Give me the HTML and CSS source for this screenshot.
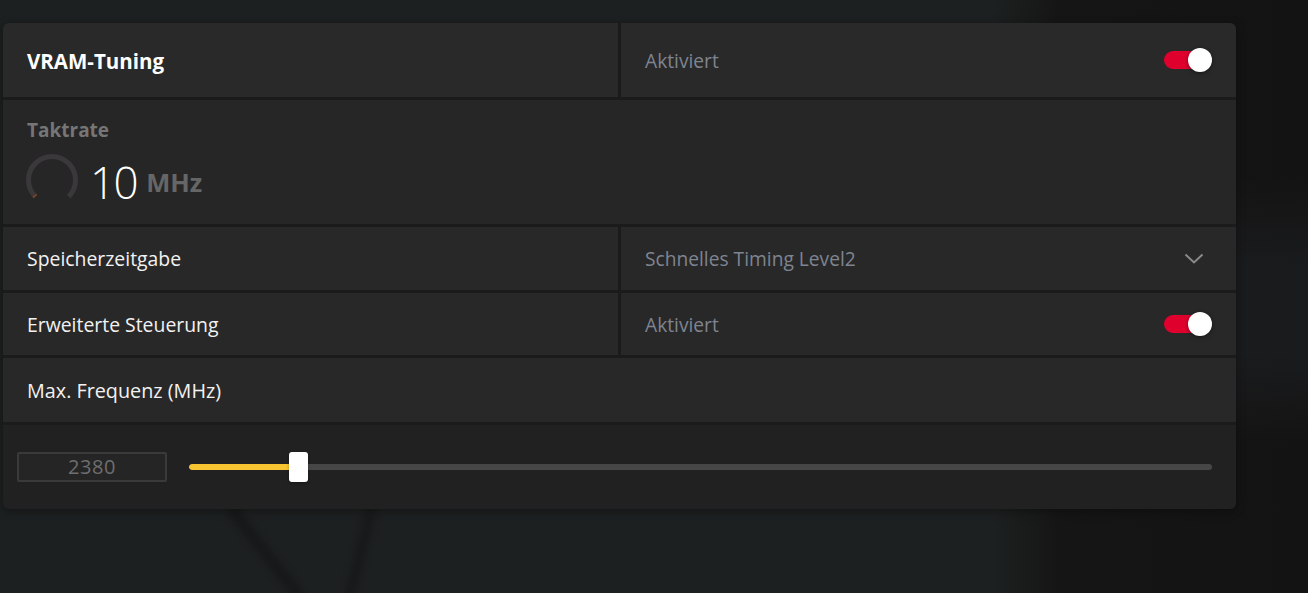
FILE: index.html
```html
<!DOCTYPE html>
<html lang="de">
<head>
<meta charset="utf-8">
<title>VRAM-Tuning</title>
<link rel="stylesheet" href="styles.css">
</head>
<body>
<div class="backdrop" aria-hidden="true">
  <span class="branch branch-a"></span>
  <span class="branch branch-b"></span>
</div>

<main class="panel">
  <section class="row split head">
    <div class="cell"><span class="title">VRAM-Tuning</span></div>
    <div class="cell end">
      <span class="value">Aktiviert</span>
      <span class="toggle"><span class="track"></span><span class="knob"></span></span>
    </div>
  </section>

  <section class="row clock">
    <div class="muted-label">Taktrate</div>
    <div class="reading">
      <svg class="gauge" width="52" height="52" viewBox="0 0 52 52">
        <path d="M9.38 42.62 A23.5 23.5 0 1 1 42.62 42.62" fill="none" stroke="#3a383a" stroke-width="5"/>
        <path d="M9.38 42.62 A23.5 23.5 0 0 1 8.3 41.3" fill="none" stroke="#7a4424" stroke-width="5"/>
      </svg>
      <span class="num">10</span>
      <span class="unit">MHz</span>
    </div>
  </section>

  <section class="row split item">
    <div class="cell"><span class="label">Speicherzeitgabe</span></div>
    <div class="cell end">
      <span class="value">Schnelles Timing Level2</span>
      <svg class="chevron" width="20" height="12" viewBox="0 0 20 12"><polyline points="1.5,1.5 10,9.5 18.5,1.5" fill="none" stroke="#8a8a8a" stroke-width="2"/></svg>
    </div>
  </section>

  <section class="row split item item-b">
    <div class="cell"><span class="label">Erweiterte Steuerung</span></div>
    <div class="cell end">
      <span class="value">Aktiviert</span>
      <span class="toggle"><span class="track"></span><span class="knob"></span></span>
    </div>
  </section>

  <section class="row item single">
    <span class="label">Max. Frequenz (MHz)</span>
  </section>

  <section class="row slider-row">
    <div class="num-box">2380</div>
    <div class="slider">
      <div class="rail"><div class="fill" style="width: 10.7%"></div></div>
      <div class="thumb" style="left: 10.7%"></div>
    </div>
  </section>
</main>
</body>
</html>
```

FILE: styles.css
```css
* { box-sizing: border-box; }

html, body {
  margin: 0;
  height: 100%;
}

body {
  position: relative;
  overflow: hidden;
  padding: 23px 0 0 3px;
  font-family: "Open Sans", "Noto Sans", "DejaVu Sans", sans-serif;
  background:
    linear-gradient(to bottom, rgba(30,32,34,0) 30%, rgba(30,32,34,0.6) 45%, rgba(30,32,34,0.6) 60%, rgba(30,32,34,0) 75%) right / 72px 100% no-repeat,
    linear-gradient(to right, rgba(20,20,20,0) 0, rgba(20,20,20,0) 76%, #151515 81%, #131313 100%),
    #1d2020;
}

.backdrop {
  position: absolute;
  inset: 0;
  z-index: 0;
}

.branch {
  position: absolute;
  display: block;
  background: #151717;
  border-radius: 6px;
  filter: blur(4px);
}

.branch-a {
  left: 262px;
  top: 495px;
  width: 10px;
  height: 120px;
  transform: rotate(-38deg);
}

.branch-b {
  left: 356px;
  top: 505px;
  width: 8px;
  height: 100px;
  transform: rotate(14deg);
}

.panel {
  position: relative;
  z-index: 1;
  width: 1233px;
  display: flex;
  flex-direction: column;
  gap: 3px;
  background: #1b1b1b;
  border-radius: 6px;
  overflow: hidden;
  box-shadow: 0 2px 10px rgba(0,0,0,0.35);
}

.row { background: #282828; }

.split {
  display: grid;
  grid-template-columns: 1fr 1fr;
  gap: 3px;
  background: transparent;
}

.cell {
  background: #282828;
  display: flex;
  align-items: center;
  padding: 0 24px;
}

.cell.end { justify-content: space-between; }

.head { height: 74px; }
.head .cell { background: #292929; }

.title {
  color: #ffffff;
  font-weight: 700;
  font-size: 20.5px;
  padding-top: 2px;
}

.value {
  color: #7f8491;
  font-size: 19.2px;
}

.label {
  color: #f2f2f2;
  font-size: 19.4px;
}

.toggle {
  position: relative;
  width: 48px;
  height: 24px;
  flex: none;
}

.toggle .track {
  position: absolute;
  left: 0;
  top: 3px;
  width: 40px;
  height: 18px;
  border-radius: 9px;
  background: #e0002d;
}

.toggle .knob {
  position: absolute;
  right: 0;
  top: 0;
  width: 24px;
  height: 24px;
  border-radius: 50%;
  background: #ffffff;
  box-shadow: 0 1px 4px rgba(0,0,0,0.45);
}

.clock {
  height: 124px;
  background: #262626;
  padding: 17px 24px 0 23px;
}

.muted-label {
  color: #767676;
  font-weight: 700;
  font-size: 19px;
  padding-left: 1px;
  line-height: 26px;
}

.reading {
  display: flex;
  align-items: center;
  margin-top: 11px;
  height: 52px;
}

.gauge { flex: none; }

.num {
  color: #ffffff;
  font-size: 44px;
  font-weight: 300;
  margin-left: 12px;
  letter-spacing: -1.5px;
  line-height: 52px;
  padding-top: 3px;
}

.unit {
  color: #666666;
  font-size: 25.5px;
  font-weight: 700;
  margin-left: 9px;
  padding-top: 3px;
}

.item { height: 63px; }
.item-b { height: 62px; }
.item .cell { background: #282828; }

.chevron { margin-right: 8px; flex: none; }

.single {
  height: 64px;
  display: flex;
  align-items: center;
  padding: 0 24px;
}

.single .label { font-size: 19.8px; }

.slider-row {
  height: 84px;
  background: #212121;
  display: flex;
  align-items: center;
  padding: 0 24px 0 14px;
}

.num-box {
  width: 150px;
  height: 30px;
  flex: none;
  border: 2px solid #3a3a3a;
  border-radius: 2px;
  background: #252525;
  color: #6e6e6e;
  font-size: 20px;
  line-height: 26px;
  text-align: center;
  letter-spacing: 0.6px;
}

.slider {
  position: relative;
  flex: 1;
  margin-left: 22px;
  height: 30px;
  display: flex;
  align-items: center;
}

.rail {
  width: 100%;
  height: 6px;
  border-radius: 3px;
  background: #474747;
  overflow: hidden;
}

.fill {
  height: 100%;
  background: #f7c531;
  border-radius: 3px 0 0 3px;
}

.thumb {
  position: absolute;
  top: 0;
  width: 19px;
  height: 30px;
  margin-left: -9px;
  border-radius: 3px;
  background: #ffffff;
  box-shadow: 0 1px 3px rgba(0,0,0,0.35);
}
```
